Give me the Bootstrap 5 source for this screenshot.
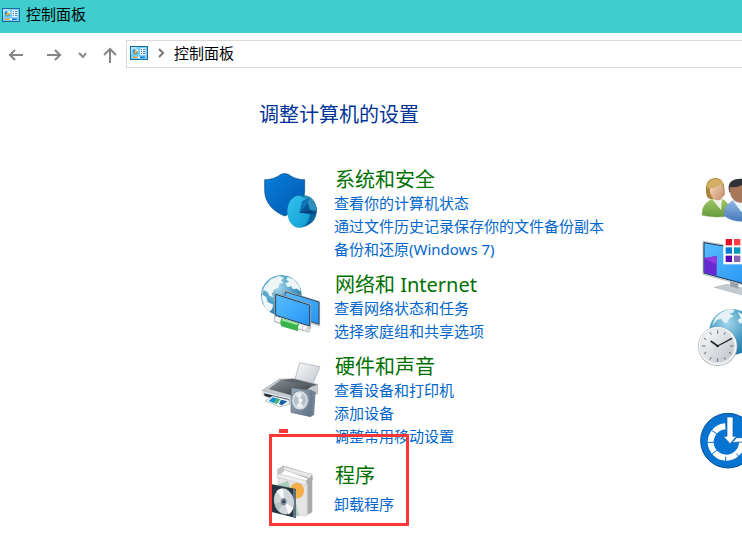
<!DOCTYPE html>
<html lang="zh-CN">
<head>
<meta charset="utf-8">
<meta name="viewport" content="width=device-width, initial-scale=1">
<title>控制面板</title>
<link href="https://cdn.jsdelivr.net/npm/bootstrap@5.3.0/dist/css/bootstrap.min.css" rel="stylesheet">
<script src="https://cdn.jsdelivr.net/npm/bootstrap@5.3.0/dist/js/bootstrap.bundle.min.js"></script>
<style>
body{font-family:"Noto Sans","Noto Sans CJK SC",sans-serif;font-size:15px;line-height:23px;color:#000;background:#fff;overflow-x:hidden}
.titlebar{background:#40cdce;height:33px;padding:0 2px 4px;gap:6px}
.titlebar h1{font-size:15px;line-height:23px}
.toolbar{height:42px;padding-top:7px}
.tools{height:28px;padding:2px 8px 0 8px}
.tool{background:none;color:#858585;line-height:0}
.tool svg,.crumb svg{fill:none;stroke:currentColor;stroke-width:2}
.address{border:1px solid #d9d9d9;border-right:0;height:28px;padding:0 0 2px 3px}
.crumb{color:#777}
.crumb a{color:#000}
.panel{padding:26px 0 0 259px}
.panel h2{font-size:20px;line-height:24px;padding-top:2px;color:#039}
.main-col{flex:0 0 441px}
.cats{margin-top:39px}
.category{gap:11px;margin-bottom:10px}
.category h3{font-size:20px;line-height:24px;padding-top:2px}
.category h3 a{color:#007000;padding-left:1px}
.category li a{color:#0066cc}
.category a,.crumb a{text-decoration:none}
.category a:hover{text-decoration:underline}
.pic{width:64px;height:64px;flex:none;overflow:visible}
.programs{margin-top:14px}
.programs h3{margin-bottom:5px}
.marker{left:10px;top:-28px;width:140px;height:92px;border:3px solid #fb3636;pointer-events:none}
.marker-tab{left:20px;top:-33px;width:9px;height:4px;background:#fb3636}
.side-col{gap:4px}
.ease{margin-top:38px}
</style>
</head>
<body>
<svg width="0" height="0" class="position-absolute" aria-hidden="true">
<defs>
<linearGradient id="screen" x1="0" y1="0" x2="1" y2="1"><stop stop-color="#58bcff"/><stop offset=".5" stop-color="#3fa9fa"/><stop offset="1" stop-color="#2592f0"/></linearGradient>
<radialGradient id="sea" cx=".4" cy=".3" r=".8"><stop stop-color="#a7d7ec"/><stop offset=".5" stop-color="#4b9fc6"/><stop offset="1" stop-color="#1c6c9c"/></radialGradient>
<linearGradient id="metal" x1="0" y1="0" x2="1" y2="1"><stop stop-color="#fafbfc"/><stop offset="1" stop-color="#bcc2c8"/></linearGradient>
<linearGradient id="dark" x1="0" y1="0" x2="1" y2="1"><stop stop-color="#8b9196"/><stop offset="1" stop-color="#30363b"/></linearGradient>
<linearGradient id="speaker" x1="0" y1="0" x2="1" y2="1"><stop stop-color="#98a9b8"/><stop offset="1" stop-color="#607387"/></linearGradient>
<linearGradient id="shield" x1="0" y1="0" x2="1" y2="1"><stop stop-color="#087edc"/><stop offset="1" stop-color="#0058ae"/></linearGradient>
<linearGradient id="pie" x1="0" y1="0" x2="1" y2="1"><stop stop-color="#34c4ee"/><stop offset="1" stop-color="#109bd0"/></linearGradient>
<linearGradient id="skin" x1="0" y1="0" x2="1" y2="1"><stop stop-color="#f9dcc2"/><stop offset="1" stop-color="#c58b67"/></linearGradient>
<linearGradient id="green" x1="0" y1="0" x2="0" y2="1"><stop stop-color="#a0c866"/><stop offset="1" stop-color="#659b3c"/></linearGradient>
<linearGradient id="blue" x1="0" y1="0" x2="0" y2="1"><stop stop-color="#91b7e5"/><stop offset="1" stop-color="#4679b8"/></linearGradient>
<symbol id="cp" viewBox="0 0 54 42"><path fill="#176b9b" d="M0 0h54v42H0z"/><path fill="#79cdf9" d="M3 3h48v36H3z"/><path fill="#b3e3fd" d="M3 3h20L3 26z"/><circle cx="16" cy="17" r="9" fill="#fff"/><path fill="#159be5" d="M16 8a9 9 0 1 0 9 9h-9z"/><path fill="#ffac23" d="M10 17a6 6 0 1 0 6-6v6z"/><path fill="#fff" d="M30 7h17v20H30z"/><path stroke="#2778ad" stroke-width="3" d="M32 11h4m3 0h7m-14 6h4m3 0h7m-14 6h4m3 0h7"/><path fill="#ff9b12" d="M9 32h14v4H9z"/><path fill="#fff" d="M23 32h7v4h-7z"/><path fill="#006fc3" d="M30 32h14v4H30z"/></symbol>
</defs>
</svg>

<header>
<div class="titlebar d-flex align-items-center">
<svg width="18" height="14" aria-hidden="true"><use href="#cp"/></svg>
<h1 class="m-0 fw-normal">控制面板</h1>
</div>
<nav class="toolbar d-flex" aria-label="导航">
<div class="tools d-flex align-items-center">
<button class="tool border-0 p-0" aria-label="后退"><svg width="15" height="14"><path d="M15 7H1M7 2 2 7l5 5"/></svg></button>
<button class="tool border-0 p-0 ms-4" aria-label="前进"><svg width="15" height="14"><path d="M0 7h14M8 2l5 5-5 5"/></svg></button>
<button class="tool border-0 p-0 ms-3" aria-label="最近位置"><svg width="9" height="8"><path d="m1 2 4 4 3-4"/></svg></button>
<button class="tool border-0 p-0 ms-3" aria-label="上移"><svg width="15" height="16"><path d="M7 16V2M1 8l6-6 6 6"/></svg></button>
</div>
<div class="address d-flex flex-grow-1 align-items-center">
<svg width="18" height="14" aria-hidden="true"><use href="#cp"/></svg>
<div class="crumb d-flex align-items-center ms-2"><svg width="10" height="10" aria-hidden="true"><path d="m3 1 4 4-4 4"/></svg><a href="#" class="ms-2">控制面板</a></div>
</div>
</nav>
</header>

<main class="panel">
<h2 class="m-0 fw-normal">调整计算机的设置</h2>
<div class="cats d-flex">
<div class="main-col">
<section class="category d-flex">
<svg class="pic" viewBox="27 18 192 192" aria-hidden="true">
<path fill="url(#shield)" stroke="#064c82" stroke-width="2" d="M44 59c22 0 38-8 47-15q13-7 26 0c9 7 25 15 47 15v32c0 37-25 63-60 77-35-14-60-40-60-77z"/>
<path fill="#07679c" d="M150 106c27-4 48 15 50 43 2 29-18 48-48 54z"/>
<path fill="#2690bb" d="M160 106c23 1 39 21 40 43l-22 3z"/>
<ellipse cx="146" cy="155" rx="34" ry="48" fill="url(#pie)"/>
<path fill="#075796" d="m148 158 32-45c12 8 19 24 21 38l-4 12z"/><path fill="#2e91bb" d="m172 124 10-10c11 10 18 25 18 39l-20-4z"/><path fill="#073f7b" d="m148 158 32-7 18 11z"/><path fill="#1272b8" d="m156 124 24-12-10 22-22 24z"/>
</svg>
<div><h3 class="m-0 fw-normal"><a href="#">系统和安全</a></h3>
<ul class="list-unstyled m-0"><li><a href="#">查看你的计算机状态</a></li><li><a href="#">通过文件历史记录保存你的文件备份副本</a></li><li><a href="#">备份和还原(Windows 7)</a></li></ul></div>
</section>

<section class="category d-flex">
<svg class="pic" viewBox="27 18 192 192" aria-hidden="true">
<circle cx="94" cy="91" r="61" fill="url(#sea)"/>
<path fill="#edf6f5" d="m45 62 18-19 24-10 15 5-9 8 7 7-12 4-3 11-12 5-8 14 5 9-11-3-6-12-12-6-4 13 12 9 4 14 17 8-4 14-9 9-13-16-9-26 2-22zM113 36l18 7 17 20 4 17-11-9-12 1-5-8-12 2-6-11 12-5-9-6z"/>
<path fill="#e9edef" stroke="#9da9af" stroke-width="2" d="m102 76 107 34v73l-107-35z"/><path fill="url(#screen)" stroke="#33475a" stroke-width="3" d="m105 80 102 31v67l-102-33z"/>
<path fill="#e9eef1" stroke="#889399" stroke-width="2" d="m74 84 108 34v72L74 155z"/><path fill="url(#screen)" stroke="#273c50" stroke-width="3" d="m77 88 102 32v63L77 151z"/>
<path stroke="#a2abad" stroke-width="18" stroke-linecap="round" d="m80 164 92 28"/><path stroke="#f5f7f6" stroke-width="14" stroke-linecap="round" d="m80 163 92 28"/>
<path fill="#39b34b" d="m94 160 54 17q-6 8-3 22l-51-15q-6-11 0-24"/><path stroke="#9be69f" stroke-width="5" d="m96 164 46 14"/><path stroke="#b2b9b8" stroke-width="2" d="m159 180-4 20"/><ellipse cx="174" cy="195" rx="6" ry="8" fill="#d7dbda" stroke="#a7adac"/>
</svg>
<div><h3 class="m-0 fw-normal"><a href="#">网络和 Internet</a></h3>
<ul class="list-unstyled m-0"><li><a href="#">查看网络状态和任务</a></li><li><a href="#">选择家庭组和共享选项</a></li></ul></div>
</section>

<section class="category d-flex">
<svg class="pic" viewBox="27 9 192 192" aria-hidden="true">
<path fill="url(#metal)" stroke="#a1a8ae" stroke-width="2" d="m149 38 61 12-29 68-50-16z"/>
<path fill="#c3c9cd" stroke="#777f84" d="m35 122 53-35 44-1 71 17v28l-76 18z"/>
<path fill="url(#dark)" d="m56 117 36-27 98 16-49 34z"/><path fill="#5b6369" d="m90 90 39-4 73 18-14 5z"/>
<path fill="#e2e6e8" d="m34 123 88 22v20l-86-28z"/><path fill="#252e35" d="m42 130 76 18v11l-74-21z"/>
<path fill="#f5f8fa" stroke="#9ca6ae" stroke-width="2" d="m67 138 50 12 2 12-29 9-44-18z"/><path fill="#168bd5" d="m68 142 19 5-14 13-17-7z"/><path fill="#42b678" d="m79 145 12 3-10 15-10-5z"/><path fill="#165dad" d="m93 149 19 5-16 12-9-4z"/>
<path fill="#718294" d="m182 119 15 7-5 69-10 5z"/><path fill="url(#speaker)" stroke="#536576" stroke-width="2" d="m124 113 58 8v79l-59-13z"/>
<ellipse cx="150" cy="151" rx="25" ry="29" fill="#d8dfe4" stroke="#8997a3" stroke-width="3"/><ellipse cx="150" cy="151" rx="18" ry="22" fill="#b6c0c9"/><path fill="#e9edf0" d="m150 151-14-17q10-10 20-2zm0 0 11 20q-13 8-22-3z"/><circle cx="151" cy="151" r="7" fill="#f6f7f7" stroke="#9da8b1"/>
</svg>
<div><h3 class="m-0 fw-normal"><a href="#">硬件和声音</a></h3>
<ul class="list-unstyled m-0"><li><a href="#">查看设备和打印机</a></li><li><a href="#">添加设备</a></li><li><a href="#">调整常用移动设置</a></li></ul></div>
</section>

<section class="category programs d-flex position-relative">
<svg class="pic" viewBox="-3 126 192 192" aria-hidden="true">
<path fill="#aaa" d="m142 184 15-8v100l-15 9z"/><path fill="#e4e4e4" stroke="#bbb" d="m54 161 86 23v105l-86-11z"/>
<path fill="#aacdbb" d="m53 194 30-12 24 64 10 43-64-11z"/><ellipse cx="111" cy="212" rx="21" ry="24" fill="#f6ae48"/>
<path fill="#85888a" d="m62 143 82 33 14-12-86-26z"/><path fill="#e6e6e6" stroke="#a3a3a3" d="m69 138 87 25-4 13-83-27z"/><path fill="#c4c5c5" stroke="#969696" d="m53 148 17-10v17l-17 12z"/><path fill="#eee" stroke="#aaa" d="m53 161 84 21 2 13-86-23z"/><path fill="#aaa" d="m139 181 18-15 2 11-18 15z"/>
<path fill="#263440" d="m35 193 73 14v87l-73-18z"/><path fill="#62717e" d="m99 206 9 3v85l-9-3z"/>
<ellipse cx="72" cy="244" rx="29" ry="39" fill="#ced6da" stroke="#eff2f3" transform="rotate(-12 72 244)"/><path fill="#fff" opacity=".85" d="m72 244-22-31q9-9 20-5zm0 0 27 20q-4 15-13 20z"/><path fill="#a1b8b0" opacity=".6" d="m72 244-28 7q3 17 12 23z"/><ellipse cx="71" cy="245" rx="9" ry="11" fill="#7a8b96"/><circle cx="71" cy="245" r="5" fill="#344653"/>
</svg>
<div><h3 class="mt-0 fw-normal"><a href="#">程序</a></h3>
<ul class="list-unstyled m-0"><li><a href="#">卸载程序</a></li></ul></div>
<span class="marker position-absolute"></span><span class="marker-tab position-absolute"></span>
</section>
</div>

<div class="side-col d-flex flex-column">
<svg class="pic" viewBox="30 3 192 192" role="img" aria-label="用户帐户">
<path fill="url(#green)" stroke="#769c50" d="M36 151c0-27 10-39 33-49h26c16 8 22 17 22 35v15q-36 9-81-1"/><path fill="#f1f1e9" d="m67 103 26 32 3-33z"/>
<path fill="#a88338" d="M51 95c-9-30 0-56 26-56 19 0 28 17 27 50l-10 9-34 5z"/><path fill="url(#skin)" d="M59 69c17 0 27-6 32-14 8 6 11 14 10 26 0 15-7 25-18 25-14 0-24-15-24-37"/><path fill="#d2af65" d="M51 70c1-19 10-28 26-29 15 0 24 10 26 20l-12-5c-8 10-20 12-31 12z"/>
<path fill="url(#blue)" stroke="#6288b2" d="M102 150c0-23 10-34 27-43h48c23 10 32 24 32 45-18 24-87 23-107-2"/><path fill="#eef4fa" d="m129 107 25 34 20-34z"/>
<path fill="#2d3034" d="M118 82c-8-27 7-41 34-41 26 0 40 17 32 46z"/><path fill="#a87658" d="M118 66q23 3 37-6l25 8c0 25-8 45-29 45-20 0-33-20-33-47"/>
</svg>
<svg class="pic" viewBox="30 6 192 192" role="img" aria-label="外观和个性化">
<path fill="#c4cbd0" stroke="#8c979d" d="m72 166 38-9 72 17-25 15z"/><path fill="#9ba4aa" d="m120 145 25 7v18l-25-7z"/>
<path fill="#dce2e5" stroke="#9da6aa" stroke-width="2" d="m39 28 146 24v114L39 127z"/><path fill="url(#screen)" stroke="#173754" stroke-width="3" d="m42 32 139 24v105L42 123z"/><path fill="#6828d4" d="m43 78 37-6v60l-37-10z"/><path fill="#963ade" d="m43 78 37-6v26z"/>
<path fill="#fff" d="M100 16h86v81h-86z"/><path fill="#e81123" d="M107 21h19v19h-19z"/><path fill="#ff3d45" d="M132 21h19v19h-19z"/><path fill="#c51c4c" d="M157 21h19v19h-19z"/><path fill="#0078d7" d="M107 46h19v19h-19z"/><path fill="#0099bc" d="M132 46h19v19h-19z"/><path fill="#00b7c3" d="M157 46h19v19h-19z"/><path fill="#5500b7" d="M107 71h19v19h-19z"/><path fill="#8764b8" d="M132 71h19v19h-19z"/><path fill="#b146c2" d="M157 71h19v19h-19z"/>
</svg>
<svg class="pic" viewBox="30 6 192 192" role="img" aria-label="时钟、语言和区域">
<circle cx="126" cy="96" r="69" fill="url(#sea)"/><path fill="#e4f1f5" d="m76 53 16-15 25-11 17 2-5 9-12 2 14 9-12 6-9 15-9-4-8-10-12 4-15 18zM143 35l27 16 8 19-18-5-10 7-7-12 9-6z"/>
<circle cx="83" cy="139" r="59" fill="#a8b0b5"/><circle cx="83" cy="138" r="55" fill="#dfe3e6" stroke="#f8f8f8" stroke-width="4"/><circle cx="83" cy="138" r="49" fill="url(#metal)"/>
<path fill="none" stroke="#626a70" stroke-width="3" d="M83 91v10m0 74v10M36 138h10m74 0h10M60 97l4 7m38 68 4 7M42 115l7 4m68 38 7 4m0-46-7 4m-68 38-7 4M106 97l-4 7m-38 68-4 7"/><path fill="none" stroke="#242b30" stroke-width="5" d="m62 123 21 15"/><path fill="none" stroke="#242b30" stroke-width="4" d="m83 138 43-23"/><circle cx="83" cy="138" r="4" fill="#242b30"/>
</svg>
<svg class="pic ease" viewBox="30 9 192 192" role="img" aria-label="轻松使用">
<circle cx="114" cy="107" r="82" fill="#0874d1" stroke="#075196" stroke-width="3"/><path fill="none" stroke="#fff" stroke-width="18" d="M106 64a47 47 0 1 0 50 48"/><path stroke="#0874d1" stroke-width="3" d="M50 112h22m-6-35 17 11m-17 59 17-13m24 21v16m33-25 10 13"/>
<path fill="#fff" stroke="#075ba9" stroke-width="2" d="M111 36h18v58h11l-20 22-20-22h11zM126 113l14-15h50v13h-43z"/>
</svg>
</div>
</div>
</main>
</body>
</html>
